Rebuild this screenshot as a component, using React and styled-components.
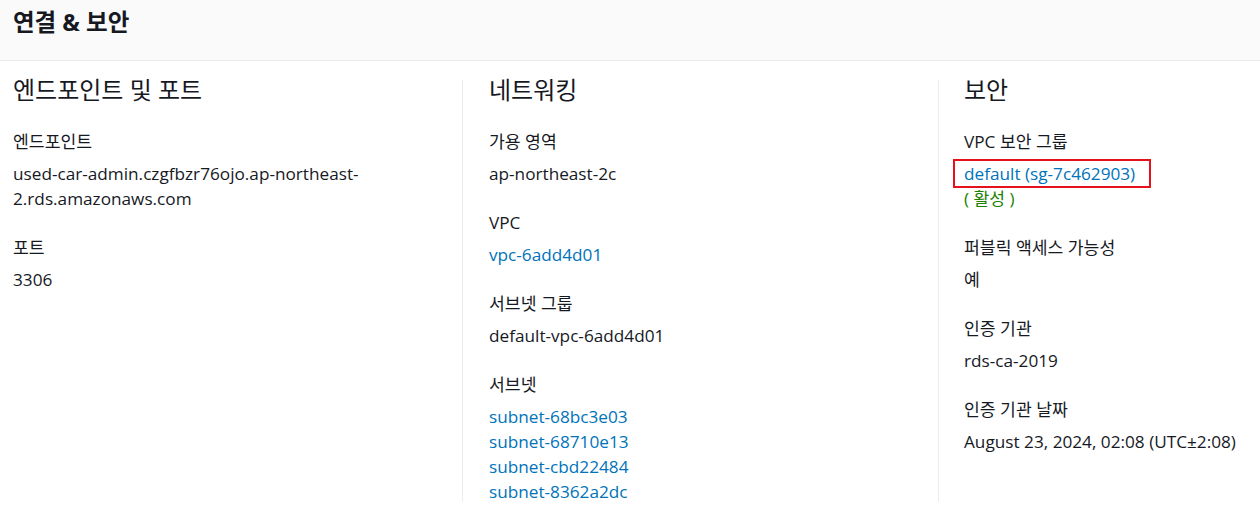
import React from "react";
import styled, { createGlobalStyle } from "styled-components";

const Global = createGlobalStyle`
  html, body { margin: 0; padding: 0; background: #ffffff; }
  body {
    font-family: "Open Sans", "Noto Sans CJK KR", sans-serif;
    color: #16191f;
  }
`;

const Panel = styled.section`
  width: 1260px;
  height: 516px;
  background: #fff;
  overflow: hidden;
`;

const Header = styled.header`
  height: 61px;
  box-sizing: border-box;
  background: #fafafa;
  border-bottom: 1px solid #eaeded;
  padding: 7px 13px 0;
`;

const Title = styled.h2`
  margin: 0;
  font-size: 23.5px;
  line-height: 30px;
  font-weight: 700;
  color: #16191f;
`;

const Columns = styled.div`
  display: grid;
  grid-template-columns: 449px 476px 1fr;
  padding: 19px 0 0 13px;
`;

const Column = styled.div`
  box-sizing: border-box;
  padding-left: ${(p) => p.$pad};
  border-left: ${(p) => (p.$divider ? "1px solid #eaeded" : "none")};
  height: 422px;
  display: flex;
  flex-direction: column;
`;

const Heading = styled.h3`
  margin: 0 0 29px;
  font-size: 24px;
  line-height: 20px;
  font-weight: 400;
  color: #16191f;
`;

const Field = styled.div`
  display: flex;
  flex-direction: column;
  margin-bottom: 24px;
`;

const Label = styled.div`
  font-size: 17.2px;
  line-height: 25px;
  margin-bottom: 7px;
  color: #16191f;
`;

const Value = styled.div`
  font-size: 17.2px;
  line-height: 25px;
  color: #16191f;
  word-break: break-all;
`;

const Link = styled.a`
  color: #0073bb;
  text-decoration: none;
  font-size: 17.2px;
  line-height: 25px;
`;

const Marked = styled.span`
  display: inline-block;
  border: 2px solid #e3121c;
  padding: 0 14px 0 9px;
  margin: -2px 0 -2px -11px;
`;

const Status = styled.div`
  color: #1d8102;
  font-size: 17.2px;
  line-height: 25px;
`;

const LinkList = styled.div`
  display: flex;
  flex-direction: column;
`;

export default function App() {
  return (
    <>
      <Global />
      <Panel>
        <Header>
          <Title>연결 &amp; 보안</Title>
        </Header>
        <Columns>
          <Column $pad="0">
            <Heading>엔드포인트 및 포트</Heading>
            <Field>
              <Label>엔드포인트</Label>
              <Value>used-car-admin.czgfbzr76ojo.ap-northeast-<br />2.rds.amazonaws.com</Value>
            </Field>
            <Field>
              <Label>포트</Label>
              <Value>3306</Value>
            </Field>
          </Column>
          <Column $divider $pad="26px">
            <Heading>네트워킹</Heading>
            <Field>
              <Label>가용 영역</Label>
              <Value>ap-northeast-2c</Value>
            </Field>
            <Field>
              <Label>VPC</Label>
              <Value><Link href="#">vpc-6add4d01</Link></Value>
            </Field>
            <Field>
              <Label>서브넷 그룹</Label>
              <Value>default-vpc-6add4d01</Value>
            </Field>
            <Field>
              <Label>서브넷</Label>
              <LinkList>
                <Link href="#">subnet-68bc3e03</Link>
                <Link href="#">subnet-68710e13</Link>
                <Link href="#">subnet-cbd22484</Link>
                <Link href="#">subnet-8362a2dc</Link>
              </LinkList>
            </Field>
          </Column>
          <Column $divider $pad="25px">
            <Heading>보안</Heading>
            <Field>
              <Label>VPC 보안 그룹</Label>
              <Value>
                <Marked><Link href="#">default (sg-7c462903)</Link></Marked>
              </Value>
              <Status>( 활성 )</Status>
            </Field>
            <Field>
              <Label>퍼블릭 액세스 가능성</Label>
              <Value>예</Value>
            </Field>
            <Field>
              <Label>인증 기관</Label>
              <Value>rds-ca-2019</Value>
            </Field>
            <Field>
              <Label>인증 기관 날짜</Label>
              <Value>August 23, 2024, 02:08 (UTC±2:08)</Value>
            </Field>
          </Column>
        </Columns>
      </Panel>
    </>
  );
}
